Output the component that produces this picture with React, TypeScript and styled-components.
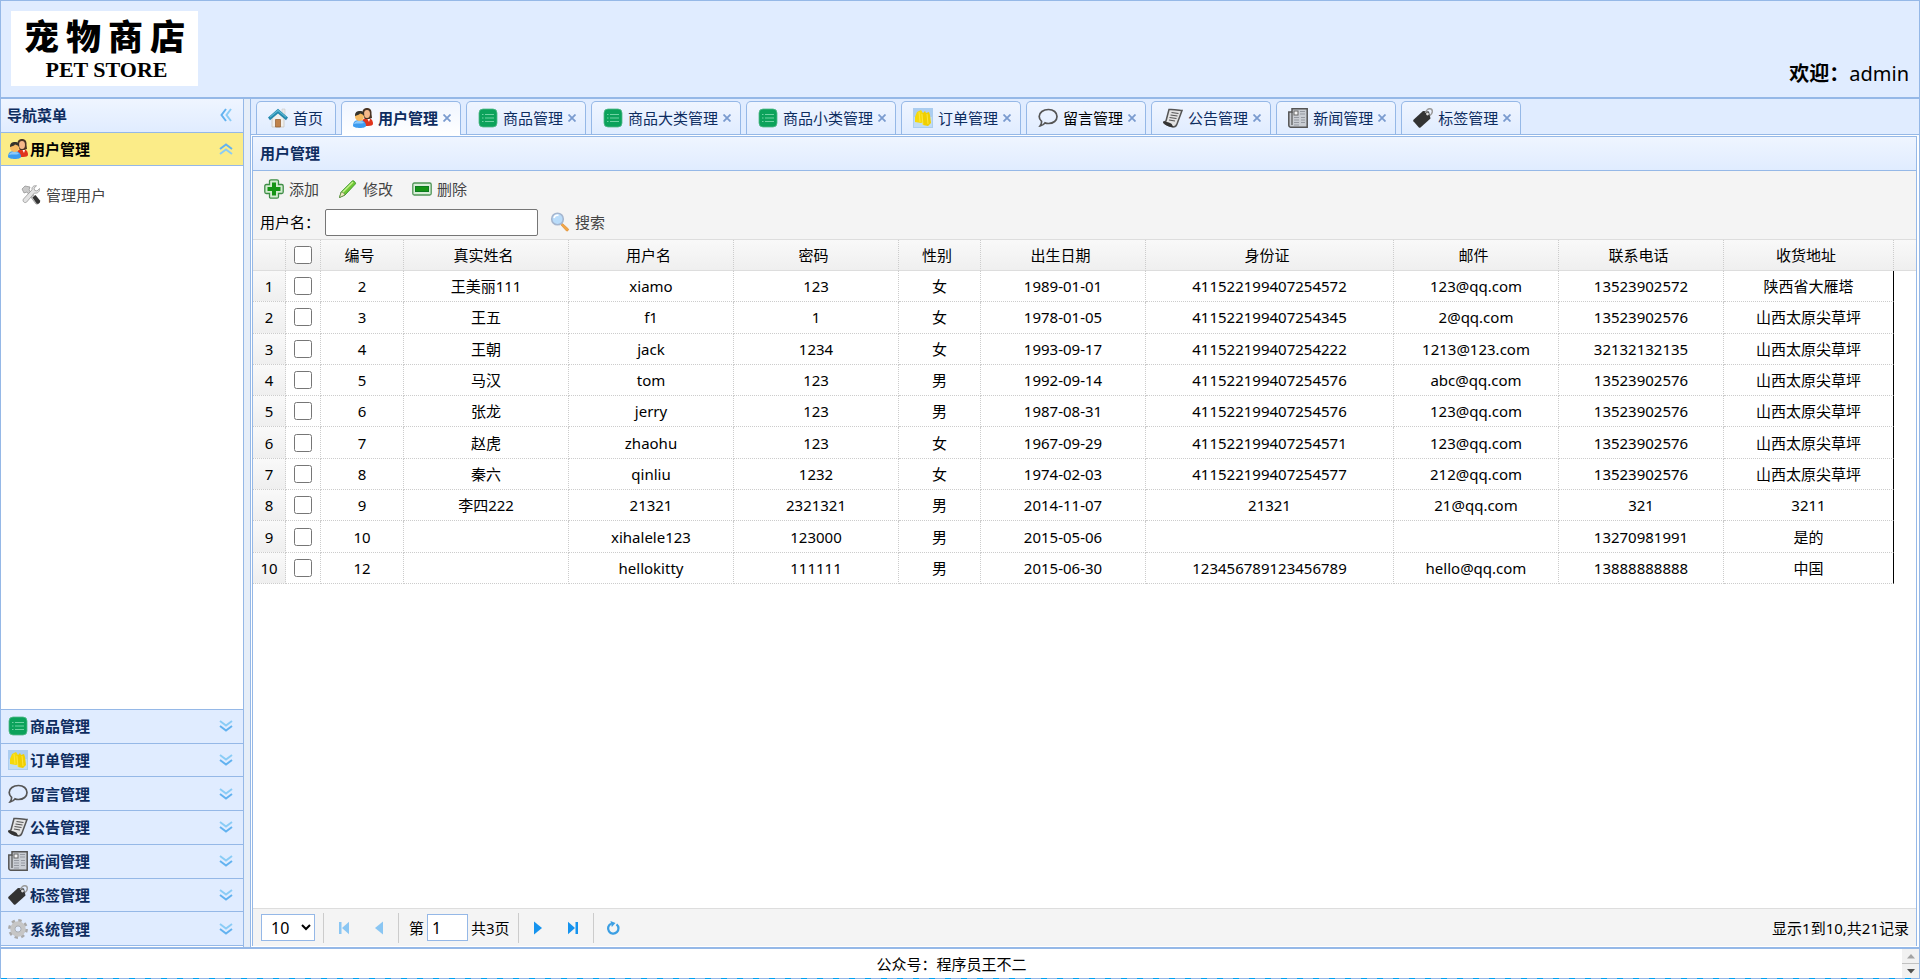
import React, { useState } from "react";
import styled, { createGlobalStyle, css } from "styled-components";

const line = "#95b8e7";
const navy = "#0e2d5f";
const pale = "#e0ecff";
const panelGradient = "linear-gradient(to bottom, #eff5ff 0, #e0ecff 100%)";

const GlobalStyle = createGlobalStyle`
  * { box-sizing: border-box; }
  body {
    margin: 0;
    font-family: "Noto Sans", "Noto Sans CJK SC", sans-serif;
    font-size: 15px;
    line-height: 20px;
    color: #000;
    background: #fff;
  }
  button, input, select { font: inherit; color: inherit; }
  button { background: none; border: 0; padding: 0; cursor: pointer; }
  h1, h2, p, ul { margin: 0; padding: 0; font-size: inherit; }
  ul { list-style: none; }
  svg { display: block; flex: none; }
`;

/* ---------- icons ---------- */

const UsersIcon = () => (
  <svg width="20" height="20" viewBox="0 0 20 20" aria-hidden="true">
    <path d="M9 17c0-5 1-7 5-7s6 2 6 6c0 1-2 2-5 2-2 0-6 0-6-1z" fill="#e0341c" />
    <path d="M14 10l2 4 1-3z" fill="#fff" />
    <path d="M9.500 6C9 2 11 0 14 0s5 2 4.500 6l.5 4-3 1h-4z" fill="#4a3524" />
    <ellipse cx="14" cy="6" rx="3" ry="4" fill="#f5b98a" />
    <path d="M0 18c0-4 2-6 6-6s7 2 7 6c0 1-3 2-6 2s-7-1-7-2z" fill="#3d9cf0" />
    <path d="M1 16c1-3 3-3 5-3s4 0 5 2c-3 1-7 0-10 1z" fill="#8cc9fb" />
    <circle cx="6.500" cy="8.500" r="4.500" fill="#f6ba62" />
    <path d="M2 8c0-4 2-5 5-5s5 2 4 5c-1-2-3-2-4-2.500C6 7 4 7 2 8z" fill="#35332c" />
  </svg>
);

const HomeIcon = () => (
  <svg width="20" height="20" viewBox="0 0 20 20" aria-hidden="true">
    <path d="M14 1h3v6h-3z" fill="#e8e8e8" stroke="#c9c9c9" strokeWidth=".6" />
    <path d="M4 9l6-6 6 6v10H4z" fill="#f1efec" stroke="#c8c4be" strokeWidth=".8" />
    <path d="M7.500 11.500h5V19h-5z" fill="#c0824a" stroke="#8e5c30" strokeWidth=".7" />
    <path d="M10 .8l10 8.700-2 2.700-8-6.600-8 6.600L0 9.500z" fill="#2389ae" />
    <path d="M10 1.500l8.500 7.500-.8.600L10 3.200 2.300 9.600 1.500 9z" fill="#5fb9d4" />
  </svg>
);

const ListIcon = () => (
  <svg width="20" height="20" viewBox="0 0 20 20" aria-hidden="true">
    <rect x="1" y="1" width="18" height="18" rx="4" fill="#0ba25b" stroke="#53b889" strokeWidth=".8" />
    <path d="M4 6.500h1.500M7 6.500h9M4 10h1.500M7 10h9M4 13.500h1.500M7 13.500h9" stroke="#6fd3a3" strokeWidth="1.100" />
  </svg>
);

const OrderIcon = () => (
  <svg width="20" height="20" viewBox="0 0 20 20" aria-hidden="true">
    <rect width="20" height="20" fill="#abcdf0" />
    <path d="M1 19h18V9H1z" fill="#c1dcf2" />
    <path d="M2 9l2-5 4-2 2 3 1 9-3 1-6-1z" fill="#f5d90a" />
    <path d="M9 6l3-3 1 2 3-1 1 3 1 8-3 3-5-1z" fill="#f0cf00" />
    <path d="M9 6l1 11M6 4l1 10M14 6l1 10" stroke="#ffea4c" strokeWidth=".8" />
  </svg>
);

const CommentIcon = () => (
  <svg width="20" height="20" viewBox="0 0 20 20" aria-hidden="true">
    <path
      d="M10.500 1.500c5 0 8.500 3 8.500 7s-3.500 7-8.500 7c-1.500 0-2.500-.2-3.500-.6-1 1.600-2.500 2.600-4.800 2.900 1-1.300 1.500-2.800 1.400-4.400C2 12 1.200 10.400 1.200 8.500c0-4 4-7 9.300-7z"
      fill="none"
      stroke="#555"
      strokeWidth="1.700"
    />
  </svg>
);

const NoticeIcon = () => (
  <svg width="20" height="20" viewBox="0 0 20 20" aria-hidden="true">
    <path d="M6 1.500c4-.5 9 .5 13 1L14 16c-.6 2-2 3-4 3-4-1-7-2-9.500-4.500L3 13z" fill="#e3e3e3" stroke="#555" strokeWidth="1.500" />
    <path d="M0 13.500c3 0 5 .5 8 2 1 .6 1.500 2 2.500 3.500C6 19 1 17 0 13.500z" fill="#333" />
    <path d="M8.500 4.500l7 1M7.500 7l7 1M6.500 9.500l7 1M6 12l6 1" stroke="#555" strokeWidth="1.200" />
  </svg>
);

const NewsIcon = () => (
  <svg width="20" height="20" viewBox="0 0 20 20" aria-hidden="true">
    <path d="M4 .8h15.200v18.400H2.500C1.200 19.200.8 18 .8 17V4H4z" fill="#c9cdd3" stroke="#555" strokeWidth="1.500" />
    <path d="M4 4v13" stroke="#555" strokeWidth="1.200" />
    <rect x="6" y="3" width="4" height="4" fill="#f5f5f5" stroke="#666" />
    <path d="M12 3.500h5M12 6h5M6 9.500h5M13 9.500h4M6 12h5M13 12h4M6 14.500h5M13 14.500h4M6 17h5" stroke="#9599a1" strokeWidth="1.200" />
  </svg>
);

const TagIcon = () => (
  <svg width="20" height="20" viewBox="0 0 20 20" aria-hidden="true">
    <path d="M10 3l6 .5 1.500 7L7.500 19.500c-.6.400-1.200.4-1.600 0L.4 13.300c-.4-.6-.4-1.100.1-1.600z" fill="#333" />
    <circle cx="14.500" cy="6" r="1.400" fill="#ddd" />
    <path d="M12.500 5c.5-3 3-5 5.500-4 2 1 1.800 4.500-1 6.500" fill="none" stroke="#9a9a9a" strokeWidth="1.500" />
  </svg>
);

const GearIcon = () => (
  <svg width="20" height="20" viewBox="0 0 20 20" aria-hidden="true">
    <circle cx="10" cy="10" r="8.300" fill="none" stroke="#a9a9a9" strokeWidth="3.200" strokeDasharray="3.260 3.260" />
    <circle cx="10" cy="10" r="5.500" fill="none" stroke="#c6c6c6" strokeWidth="4.500" />
    <circle cx="10" cy="10" r="3.100" fill="#e0ecff" stroke="#999" strokeWidth=".8" />
  </svg>
);

const ToolsIcon = () => (
  <svg width="20" height="20" viewBox="0 0 20 20" aria-hidden="true">
    <path d="M1 4l3-3 5 1-1 3 10 11c.6 2-1 3.500-3 3L6 7 3 8z" fill="#c9c9c9" stroke="#8d8d8d" strokeWidth=".7" />
    <path d="M11.500 12.500l3-2.500 4.500 5.500c.8 2-1.500 4-3.300 3z" fill="#333" />
    <path d="M18.500 3.500L16 6l-2.300-.6L13 3.200 15.500.8c-3-.6-5 1.500-4.500 4L2.500 14c-1.400 2 .8 4.500 3 3.200L13.500 8c3 .8 5.500-1.500 5-4.500z" fill="#e2e2e2" stroke="#8a8a8a" strokeWidth=".7" />
  </svg>
);

const AddIcon = () => (
  <svg width="20" height="20" viewBox="0 0 20 20" aria-hidden="true">
    <path d="M7 .8h6q1.500 0 1.500 1.500V5.500h3.200q1.500 0 1.500 1.500v6q0 1.500-1.500 1.500h-3.200v3.200q0 1.500-1.500 1.500H7q-1.500 0-1.500-1.500v-3.200H2.300Q.8 14.500.8 13V7q0-1.500 1.500-1.500h3.200V2.300Q5.500.8 7 .8z" fill="#d3ecd0" stroke="#3f8d46" strokeWidth="1.300" />
    <path d="M8 3.500h4V8h4.500v4H12v4.500H8V12H3.500V8H8z" fill="#149414" />
  </svg>
);

const EditIcon = () => (
  <svg width="20" height="20" viewBox="0 0 20 20" aria-hidden="true">
    <path d="M1.500 18.500l1.700-5.500L14.300 2c1-1 3.500 1.200 3.200 2.800L7 16z" fill="#6fc834" stroke="#3f9a2c" strokeWidth="1" />
    <path d="M4.500 13.500L15 3" stroke="#c6f08c" strokeWidth="1.400" />
    <path d="M1.500 18.500l1.700-5.500c1.500 0 3.500 1.500 3.800 3z" fill="#efe6c0" stroke="#608a42" strokeWidth=".8" />
  </svg>
);

const RemoveIcon = () => (
  <svg width="20" height="20" viewBox="0 0 20 20" aria-hidden="true">
    <rect x=".8" y="4" width="18.400" height="12" rx="1.500" fill="#d9eed8" stroke="#4f9556" strokeWidth="1.300" />
    <rect x="3.500" y="7.500" width="13" height="5" fill="#149414" stroke="#0c7a20" />
  </svg>
);

const SearchIcon = () => (
  <svg width="20" height="20" viewBox="0 0 20 20" aria-hidden="true">
    <path d="M12.500 11.500l6 5.500c.5 1-1 2.500-2 2l-5.500-6z" fill="#f2a646" stroke="#d9862a" strokeWidth=".6" />
    <circle cx="7.500" cy="7" r="5.800" fill="#b9dcfa" stroke="#a5b6cf" strokeWidth="1.600" />
    <path d="M4 6c.5-2 2.500-3 4.500-2.600" fill="none" stroke="#fff" strokeWidth="1.600" />
  </svg>
);

const Chevrons = ({ turn }: { turn: number }) => (
  <svg width="14" height="14" viewBox="0 0 14 14" aria-hidden="true">
    <g transform={`rotate(${turn} 7 7)`} fill="none" strokeWidth="2">
      <path d="M1 2l6 4.500L13 2" stroke="#8accf6" />
      <path d="M1 7l6 4.500L13 7" stroke="#62b2f0" />
    </g>
  </svg>
);

const CloseIcon = () => (
  <svg width="8" height="8" viewBox="0 0 8 8" aria-hidden="true">
    <path d="M.5.5l7 7M7.500.5l-7 7" stroke="#7a9bcf" strokeWidth="1.800" />
  </svg>
);

const PageArrow = ({ flip, bar, color }: { flip?: boolean; bar?: boolean; color: string }) => (
  <svg width="14" height="14" viewBox="0 0 14 14" aria-hidden="true">
    <g transform={flip ? "rotate(180 7 7)" : undefined} fill={color}>
      <path d={bar ? "M2 .8L9 7l-7 6.200z" : "M3 .5L11 7l-8 6.500z"} />
      {bar && <path d="M9.500 1h2.500v12H9.500z" />}
    </g>
  </svg>
);

const ReloadIcon = () => (
  <svg width="16" height="16" viewBox="0 0 16 16" aria-hidden="true">
    <path d="M11.500 4.300A5.200 5.200 0 1 1 6 3.700" fill="none" stroke="#3c9fe3" strokeWidth="2.300" />
    <path d="M5.500 1l5 2-3.700 4z" fill="#3c9fe3" />
  </svg>
);

const ScrollArrow = ({ down }: { down?: boolean }) => (
  <svg width="8" height="5" viewBox="0 0 8 5" aria-hidden="true">
    {down ? <path d="M0 0h8L4 4.500z" fill="#505050" /> : <path d="M0 4.500h8L4 0z" fill="#a3a3a3" />}
  </svg>
);

/* ---------- page frame ---------- */

const Page = styled.div`
  display: flex;
  flex-direction: column;
  height: 100vh;
  border: solid ${line};
  border-width: 1px 1px 0;
`;

const Header = styled.header`
  display: flex;
  justify-content: space-between;
  align-items: flex-start;
  height: 98px;
  padding: 10px;
  border-bottom: 2px solid ${line};
  background: ${pale};
`;

const Logo = styled.h1`
  display: flex;
  flex-direction: column;
  align-items: center;
  gap: 5px;
  width: 187px;
  height: 75px;
  padding-top: 6px;
  background: #fff;
`;

const LogoTitle = styled.span`
  display: flex;
  gap: 7px;
  font: 900 35px/36px "Noto Sans CJK SC", sans-serif;
`;

const LogoSubtitle = styled.span`
  font: 700 22px/24px "Liberation Serif", serif;
  padding-left: 4px;
`;

const Welcome = styled.p`
  align-self: flex-end;
  font-size: 20px;
  line-height: 26px;
`;

const Middle = styled.div`
  display: flex;
  flex: 1;
  min-height: 0;
`;

const Splitter = styled.div`
  width: 6px;
  background: #e6eef8;
`;

const Footer = styled.footer`
  display: flex;
  height: 32px;
  border-top: 2px solid ${line};
  background: repeating-linear-gradient(to right, #00a2f2 0 6px, ${line} 6px 16px) left bottom / 100% 1px no-repeat;
`;

const FooterText = styled.p`
  flex: 1;
  padding-top: 5px;
  text-align: center;
`;

const Scroller = styled.div`
  display: flex;
  flex-direction: column;
  width: 17px;
  height: 29px;
  background: #f1f1f1;
`;

const ScrollButton = styled.button`
  display: flex;
  flex: 1;
  align-items: center;
  justify-content: center;
  & + & { border-top: 1px solid #c1c1c1; }
`;

/* ---------- side menu ---------- */

const Side = styled.nav`
  display: flex;
  flex-direction: column;
  width: 243px;
  padding-bottom: 1px;
  border-right: 1px solid ${line};
`;

const SideTitle = styled.div`
  display: flex;
  align-items: center;
  justify-content: space-between;
  height: 34px;
  padding: 0 10px 2px 6px;
  border-bottom: 1px solid ${line};
  background: ${panelGradient};
  color: ${navy};
  font-weight: 700;
`;

const SectionButton = styled.button<{ $open?: boolean }>`
  display: flex;
  align-items: center;
  gap: 2px;
  width: 100%;
  height: 33px;
  padding: 0 10px 0 7px;
  border-bottom: 1px solid ${line};
  background: ${(p) => (p.$open ? "#fbec88" : pale)};
  color: ${(p) => (p.$open ? "#000" : navy)};
  font-weight: 700;
  text-align: left;
`;

const Grow = styled.span`
  flex: 1;
`;

const SectionBody = styled.div`
  flex: 1;
  padding: 19px 20px;
`;

const SideLink = styled.a`
  display: flex;
  align-items: center;
  gap: 5px;
  color: #444;
  text-decoration: none;
`;

const ClosedSections = styled.div`
  display: grid;
  grid-auto-rows: 1fr;
  height: 237px;
  border-top: 1px solid ${line};
  & > button { height: auto; }
`;

/* ---------- tabs ---------- */

const Center = styled.main`
  display: flex;
  flex: 1;
  flex-direction: column;
  min-width: 0;
  border-left: 1px solid ${line};
`;

const TabList = styled.ul`
  display: flex;
  gap: 5px;
  height: 36px;
  padding: 2px 5px 0;
  border-bottom: 1px solid ${line};
  background: ${pale};
`;

const TabItem = styled.li<{ $active: boolean }>`
  display: flex;
  align-items: center;
  gap: 5px;
  height: 33px;
  padding: 0 9px 0 11px;
  border: 1px solid ${line};
  border-bottom: 0;
  border-radius: 5px 5px 0 0;
  background: ${panelGradient};
  color: ${navy};
  white-space: nowrap;
  ${(p) =>
    p.$active &&
    css`
      height: 34px;
      padding-bottom: 1px;
      background: linear-gradient(to bottom, #eff5ff 0, #fff 100%);
      font-weight: 700;
    `}
`;

const HomeItem = styled(TabItem)`
  padding: 0 12px 0 11px;
`;

const TabButton = styled.button<{ $dark?: boolean }>`
  display: flex;
  align-items: center;
  gap: 5px;
  ${(p) => p.$dark && "color: #000;"}
`;

/* ---------- grid panel ---------- */

const Panel = styled.section`
  display: flex;
  flex: 1;
  flex-direction: column;
  min-height: 0;
  margin: 1px 2px 1px 1px;
  border: 1px solid ${line};
  border-bottom: 0;
`;

const PanelTitle = styled.h2`
  height: 34px;
  padding: 6px 7px;
  border-bottom: 1px solid ${line};
  background: ${panelGradient};
  color: ${navy};
`;

const Toolbar = styled.div`
  padding: 1px 7px 0;
  background: #f4f4f4;
  border-bottom: 1px solid #ddd;
`;

const ToolRow = styled.div`
  display: flex;
  align-items: center;
  gap: 19px;
  height: 33px;
  padding: 0 4px;
`;

const SearchForm = styled.form`
  display: flex;
  align-items: center;
  gap: 12px;
  height: 34px;
`;

const ToolButton = styled.button`
  display: flex;
  align-items: center;
  gap: 5px;
  color: #444;
`;

const SearchLabel = styled.label`
  display: flex;
  align-items: center;
  gap: 5px;
`;

const TextBox = styled.input`
  width: 213px;
  height: 27px;
  border: 1px solid #767676;
  border-radius: 2px;
  background: #fff;
`;

const GridBody = styled.div`
  flex: 1;
  min-height: 0;
  overflow: auto;
`;

const Grid = styled.table`
  width: 100%;
  height: 344px;
  border-spacing: 0;
  table-layout: fixed;
`;

const HeadCell = styled.th`
  height: 31px;
  padding: 0 5px 0 0;
  border-right: 1px dotted #ccc;
  border-bottom: 1px solid #ddd;
  background: linear-gradient(to bottom, #f9f9f9 0, #efefef 100%);
  font-weight: 400;
  &:last-child { border-right: 0; }
  &:nth-child(2) { padding: 0; }
`;

const Cell = styled.td<{ $kind?: "number" | "last" | "blank" }>`
  height: 31px;
  padding: 0;
  border-right: 1px dotted #ccc;
  border-bottom: 1px dotted #ccc;
  text-align: center;
  white-space: nowrap;
  ${(p) => p.$kind === "number" && "background: linear-gradient(to bottom, #f9f9f9 0, #efefef 100%);"}
  ${(p) => p.$kind === "last" && "border-right: 1px solid #000;"}
  ${(p) => p.$kind === "blank" && "border: 0;"}
`;

const Tick = styled.input`
  display: block;
  width: 18px;
  height: 18px;
  margin: 0 auto;
`;

/* ---------- pager ---------- */

const Pager = styled.div`
  display: flex;
  align-items: center;
  height: 38px;
  padding: 0 7px 0 8px;
  border-top: 1px solid #ddd;
  background: #f4f4f4;
`;

const SizeSelect = styled.select`
  width: 54px;
  height: 27px;
  margin-right: 2px;
  padding: 0 0 0 5px;
  border: 1px solid ${line};
  background: #fff;
  font-size: 16px;
`;

const Divider = styled.span`
  width: 1px;
  height: 30px;
  margin: 0 6px;
  background: #ccc;
`;

const PageButton = styled.button`
  display: flex;
  align-items: center;
  justify-content: center;
  width: 27px;
  height: 29px;
  & + & { margin-left: 8px; }
`;

const PageLabel = styled.label`
  display: flex;
  align-items: center;
  gap: 3px;
  padding: 0 2px 0 4px;
`;

const PageInput = styled.input`
  width: 41px;
  height: 27px;
  padding: 0 4px;
  border: 1px solid ${line};
  background: #fff;
  font-size: 16px;
`;

/* ---------- data ---------- */

const tabs = [
  { title: "用户管理", Icon: UsersIcon },
  { title: "商品管理", Icon: ListIcon },
  { title: "商品大类管理", Icon: ListIcon },
  { title: "商品小类管理", Icon: ListIcon },
  { title: "订单管理", Icon: OrderIcon },
  { title: "留言管理", Icon: CommentIcon, dark: true },
  { title: "公告管理", Icon: NoticeIcon },
  { title: "新闻管理", Icon: NewsIcon },
  { title: "标签管理", Icon: TagIcon },
];

const sections = [
  { title: "商品管理", Icon: ListIcon },
  { title: "订单管理", Icon: OrderIcon },
  { title: "留言管理", Icon: CommentIcon },
  { title: "公告管理", Icon: NoticeIcon },
  { title: "新闻管理", Icon: NewsIcon },
  { title: "标签管理", Icon: TagIcon },
  { title: "系统管理", Icon: GearIcon },
];

const columns: [string, number][] = [
  ["编号", 83],
  ["真实姓名", 165],
  ["用户名", 165],
  ["密码", 165],
  ["性别", 82],
  ["出生日期", 165],
  ["身份证", 248],
  ["邮件", 165],
  ["联系电话", 165],
  ["收货地址", 170],
];

const users = [
  ["2", "王美丽111", "xiamo", "123", "女", "1989-01-01", "411522199407254572", "123@qq.com", "13523902572", "陕西省大雁塔"],
  ["3", "王五", "f1", "1", "女", "1978-01-05", "411522199407254345", "2@qq.com", "13523902576", "山西太原尖草坪"],
  ["4", "王朝", "jack", "1234", "女", "1993-09-17", "411522199407254222", "1213@123.com", "32132132135", "山西太原尖草坪"],
  ["5", "马汉", "tom", "123", "男", "1992-09-14", "411522199407254576", "abc@qq.com", "13523902576", "山西太原尖草坪"],
  ["6", "张龙", "jerry", "123", "男", "1987-08-31", "411522199407254576", "123@qq.com", "13523902576", "山西太原尖草坪"],
  ["7", "赵虎", "zhaohu", "123", "女", "1967-09-29", "411522199407254571", "123@qq.com", "13523902576", "山西太原尖草坪"],
  ["8", "秦六", "qinliu", "1232", "女", "1974-02-03", "411522199407254577", "212@qq.com", "13523902576", "山西太原尖草坪"],
  ["9", "李四222", "21321", "2321321", "男", "2014-11-07", "21321", "21@qq.com", "321", "3211"],
  ["10", "", "xihalele123", "123000", "男", "2015-05-06", "", "", "13270981991", "是的"],
  ["12", "", "hellokitty", "111111", "男", "2015-06-30", "123456789123456789", "hello@qq.com", "13888888888", "中国"],
];

export default function App() {
  const [active, setActive] = useState("用户管理");
  const [picked, setPicked] = useState<string[]>([]);
  const toggle = (id: string) =>
    setPicked((old) => (old.includes(id) ? old.filter((x) => x !== id) : [...old, id]));

  return (
    <Page>
      <GlobalStyle />
      <Header>
        <Logo>
          <LogoTitle>
            {["宠", "物", "商", "店"].map((c) => (
              <span key={c}>{c}</span>
            ))}
          </LogoTitle>
          <LogoSubtitle>PET STORE</LogoSubtitle>
        </Logo>
        <Welcome>
          <strong>欢迎：</strong>admin
        </Welcome>
      </Header>

      <Middle>
        <Side aria-label="导航菜单">
          <SideTitle>
            导航菜单
            <button type="button" aria-label="折叠">
              <Chevrons turn={90} />
            </button>
          </SideTitle>
          <SectionButton $open type="button" aria-expanded="true">
            <UsersIcon />
            <Grow>用户管理</Grow>
            <Chevrons turn={180} />
          </SectionButton>
          <SectionBody>
            <SideLink href="#users">
              <ToolsIcon />
              管理用户
            </SideLink>
          </SectionBody>
          <ClosedSections>
            {sections.map(({ title, Icon }) => (
              <SectionButton key={title} type="button" aria-expanded="false">
                <Icon />
                <Grow>{title}</Grow>
                <Chevrons turn={0} />
              </SectionButton>
            ))}
          </ClosedSections>
        </Side>
        <Splitter />

        <Center>
          <TabList>
            <HomeItem $active={active === "首页"}>
              <TabButton type="button" onClick={() => setActive("首页")}>
                <HomeIcon />
                首页
              </TabButton>
            </HomeItem>
            {tabs.map(({ title, Icon, dark }) => (
              <TabItem key={title} $active={active === title}>
                <TabButton type="button" $dark={dark} onClick={() => setActive(title)}>
                  <Icon />
                  {title}
                </TabButton>
                <button type="button" aria-label={`关闭${title}`}>
                  <CloseIcon />
                </button>
              </TabItem>
            ))}
          </TabList>

          <Panel>
            <PanelTitle>用户管理</PanelTitle>
            <Toolbar>
              <ToolRow>
                <ToolButton type="button"><AddIcon />添加</ToolButton>
                <ToolButton type="button"><EditIcon />修改</ToolButton>
                <ToolButton type="button"><RemoveIcon />删除</ToolButton>
              </ToolRow>
              <SearchForm onSubmit={(e) => e.preventDefault()}>
                <SearchLabel>
                  用户名：
                  <TextBox type="text" />
                </SearchLabel>
                <ToolButton type="submit"><SearchIcon />搜索</ToolButton>
              </SearchForm>
            </Toolbar>

            <GridBody>
              <Grid>
                <colgroup>
                  <col width={33} />
                  <col width={35} />
                  {columns.map(([name, width]) => (
                    <col key={name} width={width} />
                  ))}
                  <col />
                </colgroup>
                <thead>
                  <tr>
                    <HeadCell />
                    <HeadCell>
                      <Tick
                        type="checkbox"
                        aria-label="全选"
                        checked={picked.length === users.length}
                        onChange={(e) => setPicked(e.target.checked ? users.map((u) => u[0]) : [])}
                      />
                    </HeadCell>
                    {columns.map(([name]) => (
                      <HeadCell key={name}>{name}</HeadCell>
                    ))}
                    <HeadCell />
                  </tr>
                </thead>
                <tbody>
                  {users.map((user, i) => (
                    <tr key={user[0]}>
                      <Cell $kind="number">{i + 1}</Cell>
                      <Cell>
                        <Tick
                          type="checkbox"
                          aria-label={`选择${user[2]}`}
                          checked={picked.includes(user[0])}
                          onChange={() => toggle(user[0])}
                        />
                      </Cell>
                      {user.map((value, c) => (
                        <Cell key={c} $kind={c === user.length - 1 ? "last" : undefined}>
                          {value}
                        </Cell>
                      ))}
                      <Cell $kind="blank" />
                    </tr>
                  ))}
                </tbody>
              </Grid>
            </GridBody>

            <Pager>
              <SizeSelect aria-label="每页记录数" defaultValue="10">
                <option>10</option>
                <option>20</option>
                <option>30</option>
              </SizeSelect>
              <Divider />
              <PageButton type="button" aria-label="第一页"><PageArrow flip bar color="#8ac6f3" /></PageButton>
              <PageButton type="button" aria-label="上一页"><PageArrow flip color="#8ac6f3" /></PageButton>
              <Divider />
              <PageLabel>
                第
                <PageInput type="text" defaultValue="1" />
                共3页
              </PageLabel>
              <Divider />
              <PageButton type="button" aria-label="下一页"><PageArrow color="#1593ee" /></PageButton>
              <PageButton type="button" aria-label="最后一页"><PageArrow bar color="#1593ee" /></PageButton>
              <Divider />
              <PageButton type="button" aria-label="刷新"><ReloadIcon /></PageButton>
              <Grow />
              <span>显示1到10,共21记录</span>
            </Pager>
          </Panel>
        </Center>
      </Middle>

      <Footer>
        <FooterText>公众号：程序员王不二</FooterText>
        <Scroller>
          <ScrollButton type="button" aria-label="向上滚动"><ScrollArrow /></ScrollButton>
          <ScrollButton type="button" aria-label="向下滚动"><ScrollArrow down /></ScrollButton>
        </Scroller>
      </Footer>
    </Page>
  );
}
